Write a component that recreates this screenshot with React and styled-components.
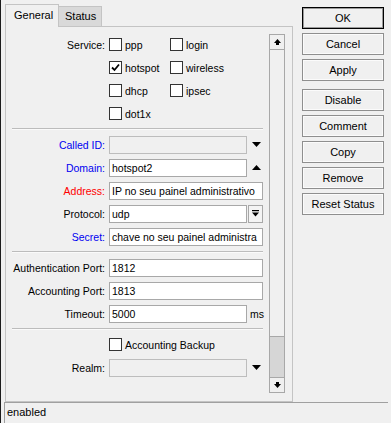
import styled, { createGlobalStyle } from "styled-components"

const GlobalStyle = createGlobalStyle`
  html, body { margin: 0; padding: 0; background: #f0f0f0; }
  body {
    font-family: "Liberation Sans", Arial, sans-serif;
    font-size: 10.5px;
    color: #000;
  }
`

const services = [
    [{ name: "ppp" }, { name: "login" }],
    [{ name: "hotspot", on: true }, { name: "wireless" }],
    [{ name: "dhcp" }, { name: "ipsec" }],
    [{ name: "dot1x" }],
]

const buttons = ["OK", "Cancel", "Apply", "Disable", "Comment", "Copy", "Remove", "Reset Status"]

const TriDown = () => (
    <svg width="9" height="5" viewBox="0 0 9 5"><path d="M0 0H9L4.5 5Z" fill="#000" /></svg>
)
const TriUp = () => (
    <svg width="9" height="5" viewBox="0 0 9 5"><path d="M0 5H9L4.5 0Z" fill="#000" /></svg>
)
const BarDown = () => (
    <svg width="7" height="7" viewBox="0 0 7 7">
        <rect x="0" y="0" width="7" height="1.2" fill="#000" />
        <path d="M0 2.5H7L3.5 6.5Z" fill="#000" />
    </svg>
)
const ArrowUp = () => (
    <svg width="7" height="6" viewBox="0 0 7 6">
        <path d="M0 4H7L3.5 0Z" fill="#000" />
        <rect x="2" y="3.5" width="3" height="2.5" fill="#000" />
    </svg>
)
const ArrowDown = () => (
    <svg width="7" height="6" viewBox="0 0 7 6">
        <path d="M0 2H7L3.5 6Z" fill="#000" />
        <rect x="2" y="0" width="3" height="2.5" fill="#000" />
    </svg>
)
const Tick = () => (
    <svg width="11" height="11" viewBox="0 0 11 11">
        <path d="M2 5.5L4.5 8L9 2.5" stroke="#000" strokeWidth="1.8" fill="none" />
    </svg>
)

const App = () => {
    return (
        <Window>
            <GlobalStyle />
            <Main>
                <TabArea>
                    <TabStrip>
                        <Tab $active>General</Tab>
                        <Tab>Status</Tab>
                    </TabStrip>
                    <Panel>
                        <Form>
                            {services.map((row, i) => (
                                <Row key={i}>
                                    <Label>{i === 0 ? "Service:" : ""}</Label>
                                    {row.map((s) => (
                                        <CheckItem key={s.name}>
                                            <Box>{s.on && <Tick />}</Box>
                                            {s.name}
                                        </CheckItem>
                                    ))}
                                </Row>
                            ))}
                            <Divider />
                            <Row>
                                <Label $color="#0000f0">Called ID:</Label>
                                <Field $narrow $disabled />
                                <Slot><TriDown /></Slot>
                            </Row>
                            <Row>
                                <Label $color="#0000f0">Domain:</Label>
                                <Field $narrow>hotspot2</Field>
                                <Slot><TriUp /></Slot>
                            </Row>
                            <Row>
                                <Label $color="#ff0000">Address:</Label>
                                <Field>IP no seu painel administrativo</Field>
                            </Row>
                            <Row>
                                <Label>Protocol:</Label>
                                <Field $narrow>udp</Field>
                                <SlotButton><BarDown /></SlotButton>
                            </Row>
                            <Row>
                                <Label $color="#0000f0">Secret:</Label>
                                <Field>chave no seu painel administra</Field>
                            </Row>
                            <Divider />
                            <Row>
                                <Label>Authentication Port:</Label>
                                <Field>1812</Field>
                            </Row>
                            <Row>
                                <Label>Accounting Port:</Label>
                                <Field>1813</Field>
                            </Row>
                            <Row>
                                <Label>Timeout:</Label>
                                <Field $narrow>5000</Field>
                                <Unit>ms</Unit>
                            </Row>
                            <Divider />
                            <Row>
                                <Label />
                                <CheckItem $wide>
                                    <Box />
                                    Accounting Backup
                                </CheckItem>
                            </Row>
                            <Row>
                                <Label>Realm:</Label>
                                <Field $narrow $disabled />
                                <Slot><TriDown /></Slot>
                            </Row>
                        </Form>
                        <Scrollbar>
                            <ScrollButton><ArrowUp /></ScrollButton>
                            <Track />
                            <Thumb />
                            <ScrollButton $bottom><ArrowDown /></ScrollButton>
                        </Scrollbar>
                    </Panel>
                </TabArea>
                <ButtonColumn>
                    {buttons.map((b) => (
                        <Button key={b} $default={b === "OK"} $gap={b === "Disable"}>
                            {b}
                        </Button>
                    ))}
                </ButtonColumn>
            </Main>
            <StatusBar>enabled</StatusBar>
        </Window>
    )
}

// Styles
const Window = styled.div`
    width: 391px;
    height: 423px;
    box-sizing: border-box;
    border-left: 1px solid #1c1c1c;
    background: #f0f0f0;
    display: flex;
    flex-direction: column;
    overflow: hidden;
`
const Main = styled.div`
    display: flex;
    height: 402px;
`
const TabArea = styled.div`
    margin: 4px 0 0 4px;
    width: 288px;
    display: flex;
    flex-direction: column;
`
const TabStrip = styled.div`
    display: flex;
    align-items: flex-end;
    height: 23px;
    margin-bottom: -1px;
`
const Tab = styled.div`
    position: relative;
    z-index: ${(p) => (p.$active ? 1 : 0)};
    box-sizing: border-box;
    height: ${(p) => (p.$active ? "23px" : "21px")};
    width: ${(p) => (p.$active ? "54px" : "43px")};
    padding: ${(p) => (p.$active ? "4px 0 0 8px" : "3px 0 0 6px")};
    background: ${(p) => (p.$active ? "#f0f0f0" : "#d9d9d9")};
    border: 1px solid #c4c4c4;
    border-bottom: ${(p) => (p.$active ? "none" : "1px solid #c4c4c4")};
    border-left: ${(p) => (p.$active ? "1px solid #c4c4c4" : "none")};
    font-size: 11px;
`
const Panel = styled.div`
    box-sizing: border-box;
    height: 376px;
    border: 1px solid #c4c4c4;
    display: flex;
    align-items: flex-start;
    padding: 6px 6px 0 6px;
`
const Form = styled.div`
    width: 251px;
    display: flex;
    flex-direction: column;
`
const Row = styled.div`
    display: flex;
    align-items: center;
    height: 23px;
`
const Label = styled.div`
    width: 93px;
    flex: none;
    margin-right: 4px;
    text-align: right;
    white-space: nowrap;
    color: ${(p) => p.$color || "#000"};
`
const CheckItem = styled.div`
    width: ${(p) => (p.$wide ? "auto" : "61px")};
    display: flex;
    align-items: center;
    gap: 3px;
    white-space: nowrap;
`
const Box = styled.div`
    box-sizing: border-box;
    flex: none;
    width: 13px;
    height: 13px;
    border: 1px solid #333;
    background: #fff;
    display: flex;
    align-items: center;
    justify-content: center;
`
const Field = styled.div`
    box-sizing: border-box;
    flex: none;
    width: ${(p) => (p.$narrow ? "138px" : "154px")};
    height: 18px;
    line-height: 16px;
    padding-left: 2px;
    border: 1px solid ${(p) => (p.$disabled ? "#bdbdbd" : "#a8a8a8")};
    background: ${(p) => (p.$disabled ? "#f0f0f0" : "#fff")};
    white-space: nowrap;
    overflow: hidden;
`
const Slot = styled.div`
    width: 16px;
    height: 18px;
    display: flex;
    align-items: center;
    justify-content: center;
    padding-left: 2px;
`
const SlotButton = styled.div`
    box-sizing: border-box;
    width: 16px;
    height: 18px;
    margin-left: 1px;
    border: 1px solid #a8a8a8;
    background: #f4f4f4;
    display: flex;
    align-items: center;
    justify-content: center;
`
const Unit = styled.div`
    margin-left: 3px;
`
const Divider = styled.div`
    height: 0;
    margin: 3px 0;
    border-top: 1px solid #bcbcbc;
    border-bottom: 1px solid #fafafa;
`
const Scrollbar = styled.div`
    box-sizing: border-box;
    margin: 1px 0 0 6px;
    width: 16px;
    height: 359px;
    border: 1px solid #a8a8a8;
    display: flex;
    flex-direction: column;
`
const ScrollButton = styled.div`
    height: 14px;
    flex: none;
    display: flex;
    align-items: center;
    justify-content: center;
    background: #f0f0f0;
    border-${(p) => (p.$bottom ? "top" : "bottom")}: 1px solid #a8a8a8;
`
const Track = styled.div`
    flex: 1;
    background: #f0f0f0;
`
const Thumb = styled.div`
    height: 40px;
    flex: none;
    background: #d6d6d6;
    border-top: 1px solid #a8a8a8;
`
const ButtonColumn = styled.div`
    margin-left: 9px;
    padding-top: 7px;
    display: flex;
    flex-direction: column;
    gap: 4px;
`
const Button = styled.div`
    box-sizing: border-box;
    width: 82px;
    height: 22px;
    margin-top: ${(p) => (p.$gap ? "4px" : "0")};
    border: 1px solid ${(p) => (p.$default ? "#000" : "#8f8f8f")};
    box-shadow: inset 0 0 0 1px ${(p) => (p.$default ? "#9a9a9a" : "#fbfbfb")};
    background: #f0f0f0;
    display: flex;
    align-items: center;
    justify-content: center;
    font-size: 11px;
`
const StatusBar = styled.div`
    margin: 0 3px 0 3px;
    height: 21px;
    border-top: 1px solid #a0a0a0;
    border-left: 1px solid #a0a0a0;
    padding: 3px 0 0 2px;
    box-sizing: border-box;
    font-size: 11px;
`

export default App
